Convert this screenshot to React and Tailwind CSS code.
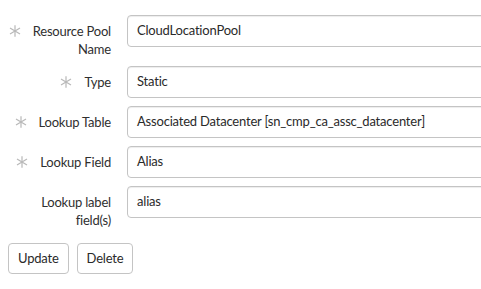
import React from "react";

function Star() {
  return (
    <svg width="12" height="12" viewBox="0 0 12 12" className="shrink-0">
      <g stroke="#b8b8b8" strokeWidth="1.2" strokeLinecap="butt">
        <line x1="6" y1="0.3" x2="6" y2="11.7" />
        <line x1="1" y1="3.1" x2="11" y2="8.9" />
        <line x1="1" y1="8.9" x2="11" y2="3.1" />
      </g>
    </svg>
  );
}

function Row({ label, value, required }) {
  return (
    <div className="flex items-start mb-2">
      <div className="w-[127px] shrink-0 pr-4 pt-[7px] flex justify-end items-start">
        {required && (
          <span className="h-[18px] flex items-center mr-3">
            <Star />
          </span>
        )}
        <span className="text-right leading-[18px] text-[13px] tracking-[-0.2px] text-[#2f2f2f]">{label}</span>
      </div>
      <div className="w-[420px] shrink-0 h-8 border border-[#c4c4c4] rounded-[4px] shadow-[inset_0_1px_1px_rgba(0,0,0,0.075)] pl-[9px] pr-2 flex items-center text-[13px] tracking-[-0.2px] text-[#2a2a2a]">
        {value}
      </div>
    </div>
  );
}

export default function App() {
  return (
    <div
      className="w-[481px] h-[289px] overflow-hidden bg-white pt-[15px]"
      style={{ fontFamily: "Lato, 'Noto Sans', sans-serif" }}
    >
      <Row label={<>Resource Pool<br />Name</>} value="CloudLocationPool" required />
      <Row label="Type" value="Static" required />
      <Row label="Lookup Table" value="Associated Datacenter [sn_cmp_ca_assc_datacenter]" required />
      <Row label="Lookup Field" value="Alias" required />
      <Row label={<>Lookup label<br />field(s)</>} value="alias" />
      <div className="flex gap-2 pl-[8px] mt-[14px]">
        <button className="h-[31px] px-[9px] border border-[#c4c4c4] rounded-[4px] bg-white text-[13px] tracking-[-0.2px] text-[#2a2a2a]">Update</button>
        <button className="h-[31px] px-[9px] border border-[#c4c4c4] rounded-[4px] bg-white text-[13px] tracking-[-0.2px] text-[#2a2a2a]">Delete</button>
      </div>
    </div>
  );
}
